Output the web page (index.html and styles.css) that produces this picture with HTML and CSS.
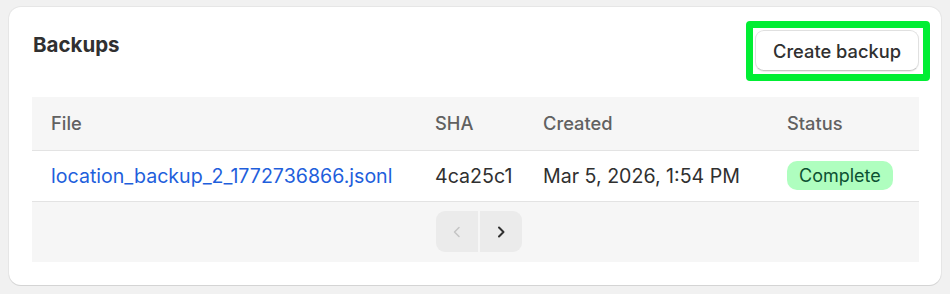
FILE: index.html
```html
<!DOCTYPE html>
<html lang="en">
<head>
    <meta charset="UTF-8">
    <title>Backups</title>
    <link rel="stylesheet" href="styles.css">
</head>
<body>
    <section class="card">
        <div class="card-head">
            <h2>Backups</h2>
            <div class="highlight">
                <button class="btn">Create backup</button>
            </div>
        </div>

        <table class="backups">
            <thead>
                <tr>
                    <th class="col-file">File</th>
                    <th class="col-sha">SHA</th>
                    <th class="col-created">Created</th>
                    <th class="col-status">Status</th>
                </tr>
            </thead>
            <tbody>
                <tr>
                    <td><a href="#">location_backup_2_1772736866.jsonl</a></td>
                    <td>4ca25c1</td>
                    <td>Mar 5, 2026, 1:54 PM</td>
                    <td><span class="badge">Complete</span></td>
                </tr>
            </tbody>
            <tfoot>
                <tr>
                    <td colspan="4">
                        <div class="pager">
                            <button class="page-btn" disabled>
                                <svg width="16" height="16" viewBox="0 0 16 16"><path d="M10 3.5L5.5 8l4.5 4.5" fill="none" stroke="currentColor" stroke-width="1.5" stroke-linecap="round" stroke-linejoin="round"/></svg>
                            </button>
                            <button class="page-btn">
                                <svg width="16" height="16" viewBox="0 0 16 16"><path d="M6 3.5L10.5 8 6 12.5" fill="none" stroke="currentColor" stroke-width="2" stroke-linecap="round" stroke-linejoin="round"/></svg>
                            </button>
                        </div>
                    </td>
                </tr>
            </tfoot>
        </table>
    </section>
</body>
</html>
```

FILE: styles.css
```css
body {
    font-family: Inter, "Noto Sans", sans-serif;
    background: #f1f1f1;
    color: #303030;
    margin: 0;
    padding: 7px 9px 9px 9px;
}

.card {
    background: #fff;
    border-radius: 12px;
    box-shadow: 0 1px 0 #d4d4d4, 0 0 0 1px #e6e6e6;
    padding: 14px 22px 23px 23px;
}

.card-head {
    display: flex;
    justify-content: space-between;
    align-items: flex-start;
    margin-bottom: 16px;
}

.card-head h2 {
    font-size: 20.5px;
    font-weight: 700;
    line-height: 24px;
    margin: 12px 0 0 1px;
    color: #303030;
}

/* green outline round the button */
.highlight {
    border: 7px solid #00ee33;
    border-radius: 4px;
    padding: 2px 4px 3px 2px;
    margin-right: -11px;
}

.btn {
    display: block;
    font-family: inherit;
    font-size: 18.3px;
    font-weight: 500;
    color: #303030;
    background: #fff;
    border: 1px solid #e0e0e0;
    border-bottom-color: #c6c6c6;
    border-radius: 9px;
    padding: 0 17px;
    height: 41px;
    box-shadow: 0 1px 1px rgba(0,0,0,0.08);
}

.backups {
    width: 100%;
    table-layout: fixed;
    border-collapse: collapse;
    font-size: 19.6px;
}

.backups th,
.backups td {
    box-sizing: border-box;
    white-space: nowrap;
}

.backups th {
    background: #f6f6f6;
    color: #616161;
    font-size: 18.3px;
    font-weight: 500;
    text-align: left;
    height: 53px;
    padding: 0 19px;
    border-bottom: 1px solid #e3e3e3;
}

.col-file { width: 384px; }
.col-sha { width: 108px; }
.col-created { width: 244px; }

.backups tbody td {
    height: 51px;
    padding: 0 19px;
    color: #303030;
    border-bottom: 1px solid #e3e3e3;
}

.backups a {
    color: #1f5fdc;
    text-decoration: none;
}

.badge {
    display: inline-block;
    background: #affebf;
    color: #0c5132;
    font-size: 18px;
    border-radius: 10px;
    padding: 4px 12px;
    line-height: 21px;
}

.backups tfoot td {
    background: #f6f6f6;
    height: 61px;
    padding: 0;
}

.pager {
    display: flex;
    justify-content: center;
    gap: 2px;
    margin-left: 7px;
}

.page-btn {
    width: 42px;
    height: 41px;
    border: none;
    background: #ebebeb;
    color: #303030;
    display: flex;
    align-items: center;
    justify-content: center;
    padding: 0;
}

.page-btn:first-child {
    border-radius: 9px 0 0 9px;
}

.page-btn:last-child {
    border-radius: 0 9px 9px 0;
}

.page-btn:disabled {
    color: #c4c4c4;
}
```
